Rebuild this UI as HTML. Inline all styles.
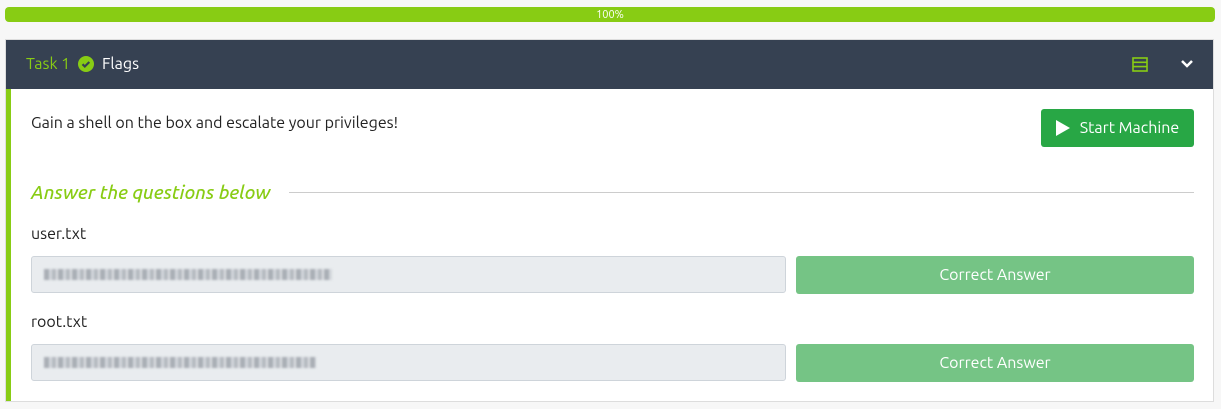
<!DOCTYPE html>
<html><head><style>
body{margin:0;background:#f7f7f7;font-family:"Ubuntu","Liberation Sans",sans-serif;width:1221px;height:409px;overflow:hidden;position:relative}
.bar{position:absolute;left:5px;top:7px;width:1210px;height:15px;background:#88cc14;border-radius:4px;color:#fff;font-size:11px;text-align:center;line-height:16px}
.card{position:absolute;left:5px;top:39px;width:1209px;height:363px;border:1px solid #ddd;background:#fff;box-sizing:border-box}
.hd{position:absolute;left:0;top:0;right:0;height:49px;background:#364152;color:#fff;font-size:16px}
.bd{position:absolute;left:0;top:49px;bottom:0;width:5px;background:#88cc14}
.t{position:absolute;font-size:16px;color:#222}
.btn{position:absolute;border-radius:3px;color:#fff;font-size:16px;text-align:center}
.inp{position:absolute;left:25px;width:755px;height:37px;background:#e9ecef;border:1px solid #ced4da;border-radius:3px;box-sizing:border-box}
.blur{position:absolute;left:12px;top:12px;height:11px;background:repeating-linear-gradient(90deg,#a9aeb5 0 5px,#d3d7dc 5px 8px,#b5bac0 8px 12px,#e0e3e6 12px 14px);filter:blur(1px)}
</style></head><body>
<div class="bar">100%</div>
<div class="card">
<div class="hd">
<span style="position:absolute;left:20px;top:15px;color:#88cc14">Task 1</span>
<svg style="position:absolute;left:72px;top:16px" width="16" height="16" viewBox="0 0 16 16"><circle cx="8" cy="8" r="8" fill="#88cc14"/><path d="M4.5 8.2l2.3 2.3 4.5-4.5" stroke="#364152" stroke-width="2.2" fill="none"/></svg>
<span style="position:absolute;left:96px;top:15px">Flags</span>
<svg style="position:absolute;left:1126px;top:17px" width="16" height="15" viewBox="0 0 16 15"><rect x="1" y="1" width="14" height="13" fill="none" stroke="#88cc14" stroke-width="1.6"/><path d="M1 5.3h14M1 9.6h14" stroke="#88cc14" stroke-width="1.6"/></svg>
<svg style="position:absolute;left:1174px;top:19px" width="14" height="10" viewBox="0 0 14 10"><path d="M2 2l5 5 5-5" stroke="#fff" stroke-width="2.5" fill="none"/></svg>
</div>
<div class="bd"></div>
<div class="t" style="left:25px;top:74px">Gain a shell on the box and escalate your privileges!</div>
<div class="btn" style="left:1035px;top:69px;width:153px;height:38px;background:#28a745;line-height:38px"><span style="display:inline-block;width:0;height:0;border-left:14px solid #fff;border-top:8px solid transparent;border-bottom:8px solid transparent;vertical-align:-3px;margin-right:10px"></span>Start Machine</div>
<div style="position:absolute;left:25px;top:141px;color:#88cc14;font-style:italic;font-weight:500;font-size:19px">Answer the questions below</div>
<div style="position:absolute;left:283px;top:152px;width:905px;height:1px;background:#ccc"></div>
<div class="t" style="left:25px;top:185px">user.txt</div>
<div class="inp" style="top:216px"><div class="blur" style="width:288px"></div></div>
<div class="btn" style="left:790px;top:216px;width:398px;height:38px;line-height:38px;background:#75c485">Correct Answer</div>
<div class="t" style="left:25px;top:273px">root.txt</div>
<div class="inp" style="top:304px"><div class="blur" style="width:272px"></div></div>
<div class="btn" style="left:790px;top:304px;width:398px;height:38px;line-height:38px;background:#75c485">Correct Answer</div>
</div>
</body></html>
